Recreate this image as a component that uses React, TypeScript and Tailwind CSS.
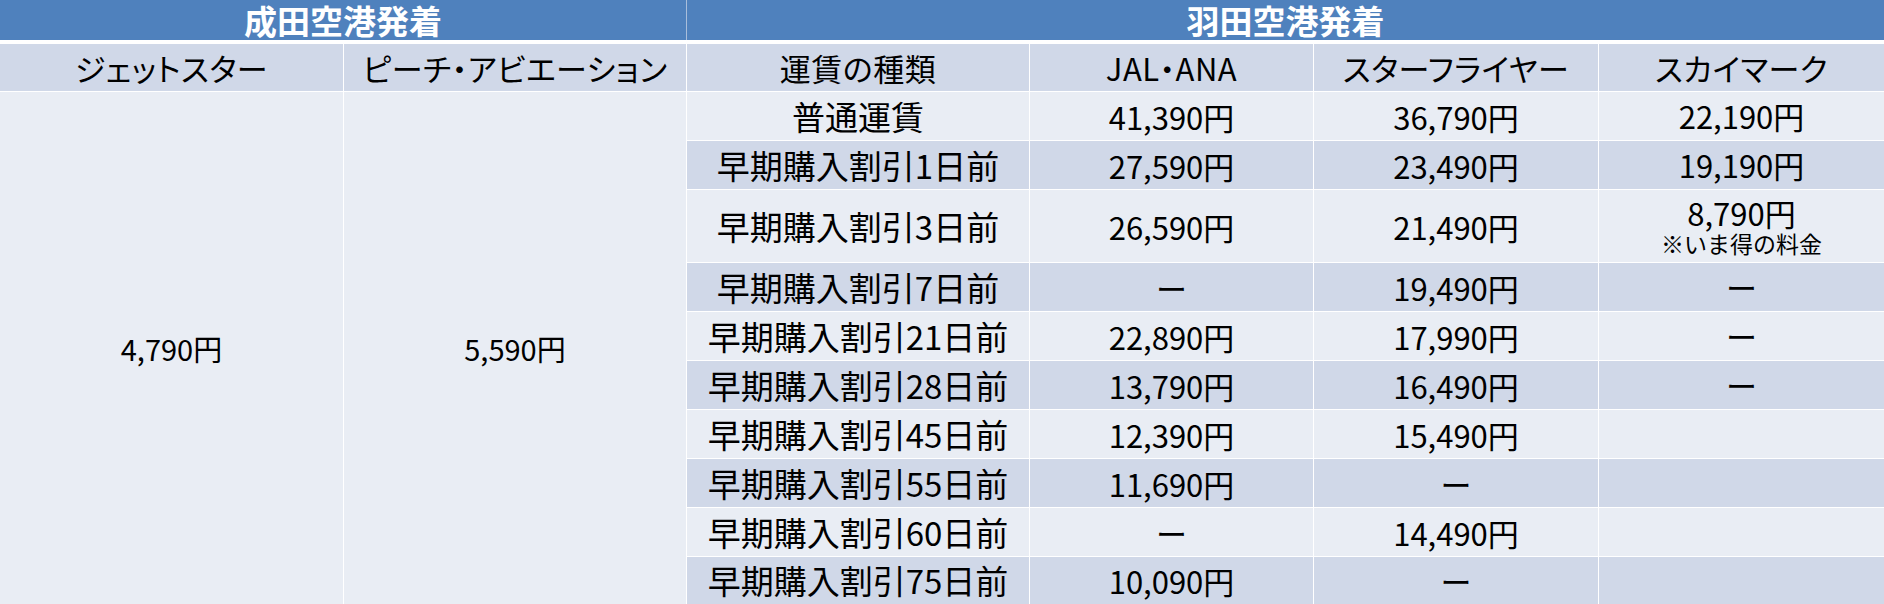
const fares = [
  { type: "普通運賃", jal: "41,390円", sfj: "36,790円", skm: "22,190円" },
  { type: "早期購入割引1日前", jal: "27,590円", sfj: "23,490円", skm: "19,190円" },
  { type: "早期購入割引3日前", jal: "26,590円", sfj: "21,490円", skm: "8,790円", note: "※いま得の料金" },
  { type: "早期購入割引7日前", jal: "ー", sfj: "19,490円", skm: "ー" },
  { type: "早期購入割引21日前", jal: "22,890円", sfj: "17,990円", skm: "ー" },
  { type: "早期購入割引28日前", jal: "13,790円", sfj: "16,490円", skm: "ー" },
  { type: "早期購入割引45日前", jal: "12,390円", sfj: "15,490円", skm: "" },
  { type: "早期購入割引55日前", jal: "11,690円", sfj: "ー", skm: "" },
  { type: "早期購入割引60日前", jal: "ー", sfj: "14,490円", skm: "" },
  { type: "早期購入割引75日前", jal: "10,090円", sfj: "ー", skm: "" },
];

const heads = ["ジェットスター", "ピーチ・アビエーション", "運賃の種類", "JAL・ANA", "スターフライヤー", "スカイマーク"];

export default function App() {
  return (
    <div className="w-[1884px] h-[604px] bg-white font-['Noto_Sans_CJK_JP',sans-serif] text-black overflow-hidden">
      <div className="grid grid-cols-[686px_1fr] gap-px bg-[#a9bedb] h-[40px]">
        <div className="bg-[#4f81bd] flex items-center justify-center text-white font-bold text-[33px] leading-[40px]">
          成田空港発着
        </div>
        <div className="bg-[#4f81bd] flex items-center justify-center text-white font-bold text-[33px] leading-[40px]">
          羽田空港発着
        </div>
      </div>
      <div className="mt-[4px] grid grid-cols-[343px_342px_342px_283px_284px_285px] grid-rows-[47px_48px_48px_72px_48px_48px_48px_48px_48px_48px_47px] gap-px bg-white">
        {heads.map((h) => (
          <div
            key={h}
            className="bg-[#d0d8e8] flex items-center justify-center text-[31px] leading-none [font-feature-settings:'palt'] tracking-[0.5px]"
          >
            {h}
          </div>
        ))}
        <div className="row-span-10 bg-[#e9edf4] flex items-center justify-center text-[29px] leading-none">
          4,790円
        </div>
        <div className="row-span-10 bg-[#e9edf4] flex items-center justify-center text-[29px] leading-none">
          5,590円
        </div>
        {fares.map((f, i) => {
          const bg = i % 2 === 0 ? "bg-[#e9edf4]" : "bg-[#d0d8e8]";
          return [
            <div key={f.type + "t"} className={`${bg} flex items-center justify-center text-[33px] leading-none`}>
              {f.type}
            </div>,
            <div key={f.type + "j"} className={`${bg} flex items-center justify-center text-[31px] leading-none`}>
              {f.jal}
            </div>,
            <div key={f.type + "s"} className={`${bg} flex items-center justify-center text-[31px] leading-none`}>
              {f.sfj}
            </div>,
            <div key={f.type + "k"} className={`${bg} flex flex-col items-center justify-center`}>
              <span className="text-[31px] leading-[34px]">{f.skm}</span>
              {f.note && <span className="text-[23px] leading-[26px]">{f.note}</span>}
            </div>,
          ];
        })}
      </div>
    </div>
  );
}
